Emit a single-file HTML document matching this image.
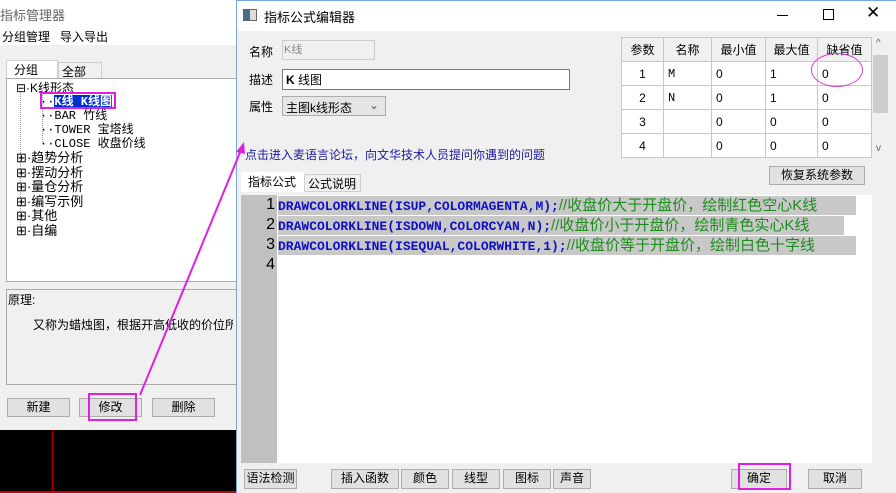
<!DOCTYPE html>
<html><head><meta charset="utf-8"><style>
*{box-sizing:border-box;margin:0;padding:0}
body{width:896px;height:493px;overflow:hidden;position:relative;background:#f0f0f0;font-family:"Liberation Sans","Noto Sans CJK SC",sans-serif;font-size:12px;color:#000}
.a{position:absolute}
.btn{position:absolute;background:#e1e1e1;border:1px solid #adadad;text-align:center;font-size:12px;line-height:17px}
.tr{position:absolute;font-size:12px;line-height:14px;white-space:nowrap}
.mono{font-family:"Liberation Mono","Noto Sans CJK SC",monospace}
table{border-collapse:collapse}
td{border:1px solid #c8c8c8;height:24px;font-size:12px;padding-left:4px;background:#fff}
th{border:1px solid #c8c8c8;height:24px;font-size:12px;font-weight:normal;background:#f0f0f0}
.code{position:absolute;left:278px;height:18px;line-height:18px;white-space:nowrap}
.kw{color:#1010c8;font-weight:bold;font-family:"Liberation Mono",monospace;font-size:13px}
.cm{color:#1c8c1c;font-size:15px}
.ln{position:absolute;left:241px;width:34px;text-align:right;font-size:16px;line-height:20px}
</style></head><body>
<!-- left window -->
<div class="a" style="left:0;top:0;width:236px;height:45px;background:#fff"></div>
<div class="a" style="left:0;top:5px;font-size:13px;color:#666">指标管理器</div>
<div class="a" style="left:2px;top:28px;font-size:12px">分组管理&nbsp;&nbsp;&nbsp;导入导出</div>
<div class="a" style="left:6px;top:60px;width:52px;height:19px;background:#fff;border:1px solid #d0d0d0;border-bottom:none;padding-left:7px;font-size:12px">分组</div>
<div class="a" style="left:58px;top:62px;width:44px;height:17px;background:#f0f0f0;border:1px solid #d0d0d0;border-bottom:none;padding-left:3px;font-size:12px">全部</div>
<div class="a" style="left:6px;top:78px;width:232px;height:204px;background:#fff;border:1px solid #aaa"></div>
<div class="a" style="left:20px;top:91px;height:140px;border-left:1px dotted #999"></div>
<div class="a" style="left:42px;top:93px;height:51px;border-left:1px dotted #999"></div>
<div class="tr" style="left:16px;top:81px">⊟·K线形态</div>
<div class="tr mono" style="left:40px;top:95px">··<span style="background:#0030d0;color:#fff;font-weight:bold">K线 K线图</span></div>
<div class="a" style="left:40px;top:92px;width:76px;height:17px;border:2px solid #e020e0"></div>
<div class="tr mono" style="left:40px;top:109px">··BAR 竹线</div>
<div class="tr mono" style="left:40px;top:123px">··TOWER 宝塔线</div>
<div class="tr mono" style="left:40px;top:137px">··CLOSE 收盘价线</div>
<div class="tr" style="left:16px;top:151px;line-height:14.5px;font-size:13px">⊞·趋势分析<br>⊞·摆动分析<br>⊞·量仓分析<br>⊞·编写示例<br>⊞·其他<br>⊞·自编</div>
<div class="a" style="left:6px;top:289px;width:232px;height:96px;border:1px solid #aaa"></div>
<div class="a" style="left:8px;top:291px;font-size:12px">原理:</div>
<div class="a" style="left:33px;top:316px;font-size:12px;white-space:nowrap;width:200px;overflow:hidden">又称为蜡烛图，根据开高低收的价位所</div>
<div class="btn" style="left:7px;top:398px;width:63px;height:19px">新建</div>
<div class="btn" style="left:79px;top:398px;width:63px;height:19px">修改</div>
<div class="a" style="left:88px;top:393px;width:49px;height:28px;border:2px solid #e020e0"></div>
<div class="btn" style="left:152px;top:398px;width:63px;height:19px">删除</div>
<div class="a" style="left:0;top:430px;width:236px;height:63px;background:#000"></div>
<div class="a" style="left:52px;top:430px;height:63px;border-left:1px dotted #c00"></div>
<div class="a" style="left:0;top:491px;width:236px;height:2px;background:#c00"></div>
<!-- right window -->
<div class="a" style="left:236px;top:0;width:660px;height:493px;background:#f0f0f0;border-left:1px solid #7aa7d8;border-top:1px solid #7aa7d8"></div>
<div class="a" style="left:237px;top:1px;width:659px;height:30px;background:#fff"></div>
<div class="a" style="left:243px;top:9px;width:14px;height:12px;border:1px solid #666;background:linear-gradient(90deg,#4a6a8a 50%,#ddd 50%)"></div>
<div class="a" style="left:264px;top:7px;font-size:13px">指标公式编辑器</div>
<div class="a" style="left:777px;top:15px;width:11px;height:1px;background:#000"></div>
<div class="a" style="left:823px;top:9px;width:11px;height:11px;border:1px solid #000"></div>
<div class="a" style="left:866px;top:3px;font-size:17px">✕</div>
<div class="a" style="left:249px;top:43px;font-size:12px">名称</div>
<div class="a" style="left:282px;top:40px;width:93px;height:20px;border:1px solid #ccc;color:#888;font-size:11px;padding-left:1px">K线</div>
<div class="a" style="left:249px;top:71px;font-size:12px">描述</div>
<div class="a" style="left:282px;top:69px;width:288px;height:21px;border:1px solid #7a7a7a;background:#fff;padding:1px 3px;font-size:12px"><b>K</b> 线图</div>
<div class="a" style="left:249px;top:98px;font-size:12px">属性</div>
<div class="a" style="left:282px;top:96px;width:104px;height:20px;border:1px solid #adadad;background:#e5e5e5;padding:2px 3px;font-size:12px">主图k线形态 <span style="position:absolute;right:6px;top:1px;color:#555">⌄</span></div>
<div class="a" style="left:245px;top:146px;font-size:12px;color:#1a1aa0">点击进入麦语言论坛，向文华技术人员提问你遇到的问题</div>
<div class="a" style="left:621px;top:37px">
<table style="width:251px"><tr><th style="width:42px">参数</th><th style="width:48px">名称</th><th style="width:54px">最小值</th><th style="width:52px">最大值</th><th>缺省值</th></tr>
<tr><td style="text-align:center;padding:0">1</td><td class="mono">M</td><td>0</td><td>1</td><td>0</td></tr>
<tr><td style="text-align:center;padding:0">2</td><td class="mono">N</td><td>0</td><td>1</td><td>0</td></tr>
<tr><td style="text-align:center;padding:0">3</td><td></td><td>0</td><td>0</td><td>0</td></tr>
<tr><td style="text-align:center;padding:0">4</td><td></td><td>0</td><td>0</td><td>0</td></tr></table></div>
<div class="a" style="left:872px;top:37px;width:17px;height:121px;background:#f0f0f0"></div>
<div class="a" style="left:873px;top:55px;width:15px;height:58px;background:#cdcdcd"></div>
<div class="a" style="left:876px;top:38px;font-size:10px;color:#666">^</div>
<div class="a" style="left:876px;top:143px;font-size:10px;color:#666">v</div>
<div class="a" style="left:811px;top:53px;width:52px;height:34px;border:1px solid #d040d0;border-radius:50%"></div>
<div class="btn" style="left:769px;top:166px;width:96px;height:19px">恢复系统参数</div>
<div class="a" style="left:241px;top:172px;width:63px;height:20px;background:#fff;padding:1px 7px;font-size:12px">指标公式</div>
<div class="a" style="left:304px;top:174px;width:57px;height:18px;border:1px solid #d0d0d0;padding:0 3px;font-size:12px;white-space:nowrap">公式说明</div>
<div class="a" style="left:241px;top:195px;width:631px;height:268px;background:#fff"></div>
<div class="a" style="left:241px;top:195px;width:36px;height:268px;background:#c0c0c0"></div>
<div class="a" style="left:278px;top:196px;width:578px;height:19px;background:#c8c8c8"></div>
<div class="a" style="left:278px;top:216px;width:566px;height:19px;background:#c8c8c8"></div>
<div class="a" style="left:278px;top:236px;width:578px;height:19px;background:#c8c8c8"></div>
<div class="ln" style="top:195px">1</div><div class="ln" style="top:215px">2</div><div class="ln" style="top:235px">3</div><div class="ln" style="top:255px">4</div>
<div class="code" style="top:197px"><span class="kw">DRAWCOLORKLINE(ISUP,COLORMAGENTA,M);</span><span class="cm">//收盘价大于开盘价，绘制红色空心K线</span></div>
<div class="code" style="top:217px"><span class="kw">DRAWCOLORKLINE(ISDOWN,COLORCYAN,N);</span><span class="cm">//收盘价小于开盘价，绘制青色实心K线</span></div>
<div class="code" style="top:237px"><span class="kw">DRAWCOLORKLINE(ISEQUAL,COLORWHITE,1);</span><span class="cm">//收盘价等于开盘价，绘制白色十字线</span></div>
<div class="btn" style="left:244px;top:469px;width:53px;height:20px">语法检测</div>
<div class="btn" style="left:331px;top:469px;width:68px;height:20px">插入函数</div>
<div class="btn" style="left:401px;top:469px;width:48px;height:20px">颜色</div>
<div class="btn" style="left:452px;top:469px;width:48px;height:20px">线型</div>
<div class="btn" style="left:503px;top:469px;width:48px;height:20px">图标</div>
<div class="btn" style="left:553px;top:469px;width:38px;height:20px">声音</div>
<div class="btn" style="left:731px;top:469px;width:56px;height:20px">确定</div>
<div class="a" style="left:738px;top:463px;width:53px;height:27px;border:2px solid #e020e0"></div>
<div class="btn" style="left:808px;top:469px;width:54px;height:20px">取消</div>
<svg class="a" style="left:0;top:0" width="896" height="493"><line x1="140" y1="395" x2="241" y2="150" stroke="#e020e0" stroke-width="2"/><polygon points="244,142 236,152 245,154" fill="#e020e0"/></svg>
</body></html>
